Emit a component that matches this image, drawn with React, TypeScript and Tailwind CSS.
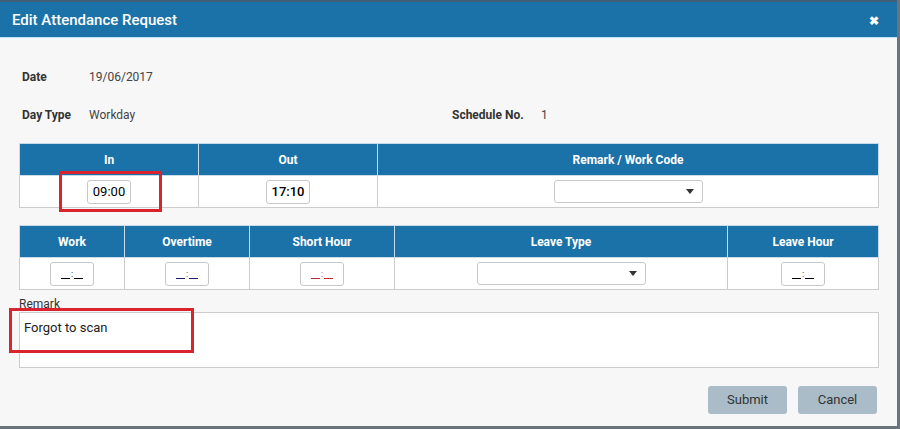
import type { ReactNode } from "react";

const font = { fontFamily: "Roboto, 'Noto Sans', sans-serif" };

function TimeBox({ value, mask, color = "border-black text-black", bold }: { value?: string; mask?: boolean; color?: string; bold?: boolean }) {
  return (
    <div className="mx-auto flex h-[24px] w-[44px] items-center justify-center rounded-[3px] border border-[#c8c8c8] bg-white">
      {mask ? (
        <span className={`flex items-end gap-[1px] ${color}`}>
          <span className="h-[10px] w-[9px] border-b" />
          <span className="text-[9px] leading-[10px]">:</span>
          <span className="h-[10px] w-[9px] border-b" />
        </span>
      ) : (
        <span className={`text-[13px] text-black ${bold ? "font-medium" : ""}`}>{value}</span>
      )}
    </div>
  );
}

function SelectBox({ w }: { w: string }) {
  return (
    <div className={`mx-auto flex h-[23px] ${w} items-center justify-end rounded-[3px] border border-[#c8c8c8] bg-white pr-[8px]`}>
      <svg width="8" height="5" viewBox="0 0 8 5">
        <path d="M0 0h8L4 5z" fill="#333" />
      </svg>
    </div>
  );
}

function Th({ children, w }: { children: ReactNode; w?: string }) {
  return (
    <th className={`h-[32px] border border-[#c9dbe6] bg-[#1b72a8] text-center text-[12px] font-bold text-white ${w ?? ""}`}>
      {children}
    </th>
  );
}

function Td({ children }: { children: ReactNode }) {
  return <td className="h-[32px] border border-[#cccccc] bg-white text-center align-middle">{children}</td>;
}

export default function App() {
  return (
    <div style={font} className="relative h-[429px] w-[900px] overflow-hidden bg-[#6b747c]">
      <div className="h-[426px] w-[897px] bg-[#f7f7f7]">
        <div className="h-[2px] bg-[#3e5f75]" />
        <div className="flex h-[36px] items-center justify-between border-b border-[#bfe3f5] bg-[#1b72a8] pr-[18px] pl-[12px] pt-[2px]">
          <span className="text-[15px] font-medium text-white">Edit Attendance Request</span>
          <span className="text-[12px] font-bold text-white">✖</span>
        </div>

        <div className="px-[19px] text-[12px] text-[#333]">
          <div className="mt-[29px] flex h-[20px] items-center pl-[3px]">
            <span className="w-[67px] font-bold">Date</span>
            <span className="text-[#444]">19/06/2017</span>
          </div>
          <div className="mt-[18px] flex h-[20px] items-center pl-[3px]">
            <span className="w-[67px] font-bold">Day Type</span>
            <span className="w-[363px] text-[#444]">Workday</span>
            <span className="w-[89px] font-bold">Schedule No.</span>
            <span className="text-[#444]">1</span>
          </div>

          <table className="mt-[18px] w-[860px] table-fixed border-collapse">
            <thead>
              <tr>
                <Th w="w-[179px]">In</Th>
                <Th w="w-[179px]">Out</Th>
                <Th>Remark / Work Code</Th>
              </tr>
            </thead>
            <tbody>
              <tr>
                <Td>
                  <TimeBox value="09:00" />
                </Td>
                <Td>
                  <TimeBox value="17:10" bold />
                </Td>
                <Td>
                  <SelectBox w="w-[149px]" />
                </Td>
              </tr>
            </tbody>
          </table>

          <table className="mt-[17px] w-[860px] table-fixed border-collapse">
            <thead>
              <tr>
                <Th w="w-[105px]">Work</Th>
                <Th w="w-[125px]">Overtime</Th>
                <Th w="w-[145px]">Short Hour</Th>
                <Th w="w-[333px]">Leave Type</Th>
                <Th>Leave Hour</Th>
              </tr>
            </thead>
            <tbody>
              <tr>
                <Td>
                  <TimeBox mask />
                </Td>
                <Td>
                  <TimeBox mask color="border-[#1a1a7a] text-[#1a1a7a]" />
                </Td>
                <Td>
                  <TimeBox mask color="border-[#c0262d] text-[#c0262d]" />
                </Td>
                <Td>
                  <SelectBox w="w-[169px]" />
                </Td>
                <Td>
                  <TimeBox mask />
                </Td>
              </tr>
            </tbody>
          </table>

          <div className="mt-[6px] text-[12px] leading-[16px] text-[#333]">Remark</div>
          <div className="h-[56px] w-[860px] border border-[#cccccc] bg-white px-[4px] pt-[5px] text-[13px] text-[#222]">
            Forgot to scan
          </div>

          <div className="mt-[18px] flex justify-end gap-[11px] pr-[1px]">
            <button className="h-[28px] w-[79px] rounded-[3px] bg-[#a9bcc7] text-[13px] text-[#333]">Submit</button>
            <button className="h-[28px] w-[79px] rounded-[3px] bg-[#a9bcc7] text-[13px] text-[#333]">Cancel</button>
          </div>
        </div>
      </div>

      <div className="absolute left-[59px] top-[171px] h-[41px] w-[103px] border-[3px] border-[#d9232e]" />
      <div className="absolute left-[9px] top-[308px] h-[45px] w-[185px] border-[3px] border-[#d9232e]" />
    </div>
  );
}
